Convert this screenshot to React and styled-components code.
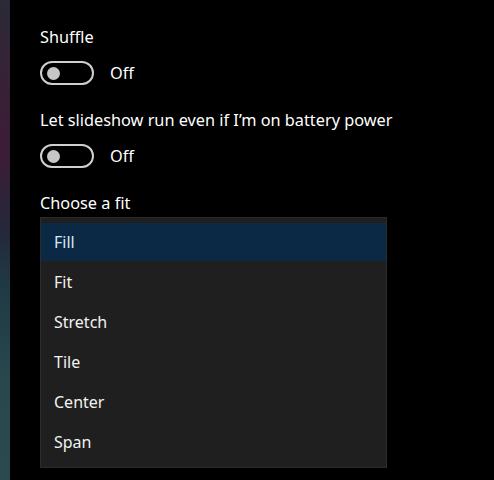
import React from 'react';
import styled, { createGlobalStyle } from 'styled-components';

const GlobalStyle = createGlobalStyle`
    html, body {
        margin: 0;
        padding: 0;
        background: #000;
    }
    body {
        font-family: "Noto Sans", "Open Sans", sans-serif;
        color: #fff;
    }
`;

const fits = ['Fill', 'Fit', 'Stretch', 'Tile', 'Center', 'Span'];

function Toggle({ label }) {
    return (
        <ToggleRow>
            <Track>
                <Knob />
            </Track>
            <ToggleText>{label}</ToggleText>
        </ToggleRow>
    );
}

function App() {
    return (
        <Page>
            <GlobalStyle />
            <Strip />
            <Content>
                <Label>Shuffle</Label>
                <Toggle label="Off" />
                <Label>Let slideshow run even if I’m on battery power</Label>
                <Toggle label="Off" />
                <Label>Choose a fit</Label>
                <Menu>
                    {fits.map((f, i) => (
                        <MenuItem key={f} selected={i === 0}>{f}</MenuItem>
                    ))}
                </Menu>
            </Content>
        </Page>
    );
}

const Page = styled.div`
    display: flex;
    width: 494px;
    height: 480px;
    overflow: hidden;
    background: #000;
`;

const Strip = styled.div`
    width: 10px;
    flex-shrink: 0;
    background: linear-gradient(
        to bottom,
        #2b2a36 0%,
        #3a1f37 22%,
        #3c1c36 32%,
        #24283a 48%,
        #1f3a44 60%,
        #28484e 80%,
        #2a4a50 100%
    );
`;

const Content = styled.div`
    display: flex;
    flex-direction: column;
    padding: 25px 0 0 30px;
`;

const Label = styled.div`
    font-size: 16.3px;
    line-height: 24px;
    color: #ffffff;
    margin-top: 23px;

    &:first-child {
        margin-top: 0;
    }
`;

const ToggleRow = styled.div`
    display: flex;
    align-items: center;
    margin-top: 12px;
    height: 24px;
`;

const Track = styled.div`
    box-sizing: border-box;
    width: 54px;
    height: 24px;
    border: 2px solid #cfcfcf;
    border-radius: 12px;
    display: flex;
    align-items: center;
    padding-left: 5px;
`;

const Knob = styled.div`
    width: 13px;
    height: 13px;
    border-radius: 50%;
    background: #c6c6c6;
`;

const ToggleText = styled.span`
    margin-left: 16px;
    font-size: 16.3px;
    line-height: 22px;
    color: #fff;
`;

const Menu = styled.div`
    box-sizing: border-box;
    margin-top: 2px;
    width: 347px;
    padding: 5px 0 4px;
    background: #1f1f1f;
    border: 1px solid #2c2c2c;
    box-shadow: 0 0 4px rgba(0, 0, 0, 0.6);
`;

const MenuItem = styled.div`
    height: 38px;
    margin-bottom: 2px;
    display: flex;
    align-items: center;
    padding-left: 13px;
    font-size: 16px;
    line-height: 20px;
    color: ${p => (p.selected ? '#d6e8f7' : '#f2f2f2')};
    background: ${p => (p.selected ? '#0b2844' : 'transparent')};
`;

export default App;
